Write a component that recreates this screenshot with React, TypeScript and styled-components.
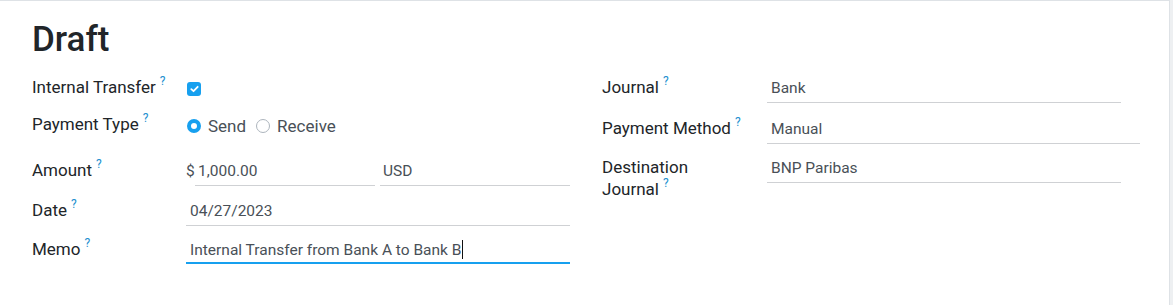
import React from "react";
import styled, { createGlobalStyle } from "styled-components";

const GlobalStyle = createGlobalStyle`
  html, body { margin: 0; padding: 0; }
  body {
    background: #eef0f2;
    font-family: Roboto, "Noto Sans", "Liberation Sans", sans-serif;
    -webkit-font-smoothing: antialiased;
  }
`;

const BLUE = "#17a0ef";

const Sheet = styled.div`
  box-sizing: border-box;
  width: 1170px;
  min-height: 305px;
  background: #ffffff;
  border-top: 1px solid #dee2e6;
  border-right: 1px solid #dee2e6;
  padding: 18px 30px 30px 32px;
`;

const Title = styled.h1`
  margin: 0;
  font-size: 35px;
  font-weight: 500;
  line-height: 1.2;
  color: #212529;
`;

const Columns = styled.div`
  display: flex;
  gap: 32px;
  margin-top: 13px;
`;

const Group = styled.div`
  display: flex;
  flex-direction: column;
  width: 538px;
`;

const Row = styled.div<{ $labelWidth: number; $mt: number }>`
  display: grid;
  grid-template-columns: ${(p) => p.$labelWidth}px 1fr;
  align-items: start;
  margin-top: ${(p) => p.$mt}px;
`;

const Label = styled.div`
  font-size: 17px;
  line-height: 22px;
  padding-top: 2px;
  color: #212529;
`;

const Help = styled.sup`
  font-size: 12px;
  line-height: 0;
  vertical-align: baseline;
  color: #1d8fcf;
  margin-left: 4px;
  position: relative;
  top: -8px;
`;

const FieldLine = styled.div`
  display: flex;
  align-items: center;
  height: 29px;
  gap: 7px;
  font-size: 17px;
  color: #495057;
`;

const CheckBox = styled.span`
  box-sizing: border-box;
  width: 14px;
  height: 14px;
  margin-left: 1px;
  border-radius: 3px;
  background: ${BLUE};
  display: inline-flex;
  align-items: center;
  justify-content: center;
`;

const RadioDot = styled.span<{ $checked?: boolean }>`
  box-sizing: border-box;
  width: 14px;
  height: 14px;
  margin-left: 1px;
  border-radius: 50%;
  background: #fff;
  border: ${(p) => (p.$checked ? `4px solid ${BLUE}` : "1px solid #adb5bd")};
`;

const RadioText = styled.span`
  margin-right: 2px;
`;

const Input = styled.div<{ $width?: number; $focused?: boolean; $pl?: number }>`
  box-sizing: border-box;
  width: ${(p) => (p.$width ? `${p.$width}px` : "100%")};
  padding: 2px 4px ${(p) => (p.$focused ? 0 : 2)}px ${(p) => p.$pl ?? 4}px;
  line-height: 24px;
  font-size: 15.5px;
  color: #495057;
  border-bottom: ${(p) => (p.$focused ? `2px solid ${BLUE}` : "1px solid #cfd1d4")};
  white-space: nowrap;
`;

const MonetaryWrap = styled.div`
  display: flex;
  align-items: flex-start;
`;

const Currency = styled.span`
  width: 9px;
  line-height: 24px;
  padding-top: 2px;
  font-size: 15.5px;
  color: #495057;
`;

const Gap = styled.span`
  width: 5px;
  flex: none;
`;

const Caret = styled.span`
  display: inline-block;
  width: 0;
  height: 19px;
  border-left: 1px solid #111;
  vertical-align: -4px;
  margin-left: 1px;
`;

const Check = () => (
  <svg width="9" height="8" viewBox="0 0 9 8">
    <polyline
      points="1.3,4.2 3.5,6.2 7.7,1.8"
      fill="none"
      stroke="#fff"
      strokeWidth="1.8"
      strokeLinecap="round"
      strokeLinejoin="round"
    />
  </svg>
);

const FieldLabel = ({ text }: { text: React.ReactNode }) => (
  <Label>
    {text}
    <Help>?</Help>
  </Label>
);

export default function App() {
  return (
    <>
      <GlobalStyle />
      <Sheet>
        <Title>Draft</Title>
        <Columns>
          <Group>
            <Row $labelWidth={154} $mt={0}>
              <FieldLabel text="Internal Transfer" />
              <FieldLine>
                <CheckBox>
                  <Check />
                </CheckBox>
              </FieldLine>
            </Row>
            <Row $labelWidth={154} $mt={8}>
              <FieldLabel text="Payment Type" />
              <FieldLine>
                <RadioDot $checked />
                <RadioText>Send</RadioText>
                <RadioDot />
                <RadioText>Receive</RadioText>
              </FieldLine>
            </Row>
            <Row $labelWidth={154} $mt={17}>
              <FieldLabel text="Amount" />
              <MonetaryWrap>
                <Currency>$</Currency>
                <Input $width={180} $pl={3}>1,000.00</Input>
                <Gap />
                <Input $width={190} $pl={3}>USD</Input>
              </MonetaryWrap>
            </Row>
            <Row $labelWidth={154} $mt={11}>
              <FieldLabel text="Date" />
              <Input>04/27/2023</Input>
            </Row>
            <Row $labelWidth={154} $mt={10}>
              <FieldLabel text="Memo" />
              <Input $focused>
                Internal Transfer from Bank A to Bank B
                <Caret />
              </Input>
            </Row>
          </Group>
          <Group>
            <Row $labelWidth={165} $mt={0}>
              <FieldLabel text="Journal" />
              <Input $width={354}>Bank</Input>
            </Row>
            <Row $labelWidth={165} $mt={12}>
              <FieldLabel text="Payment Method" />
              <Input $width={373}>Manual</Input>
            </Row>
            <Row $labelWidth={165} $mt={10}>
              <FieldLabel
                text={
                  <>
                    Destination
                    <br />
                    Journal
                  </>
                }
              />
              <Input $width={354}>BNP Paribas</Input>
            </Row>
          </Group>
        </Columns>
      </Sheet>
    </>
  );
}
